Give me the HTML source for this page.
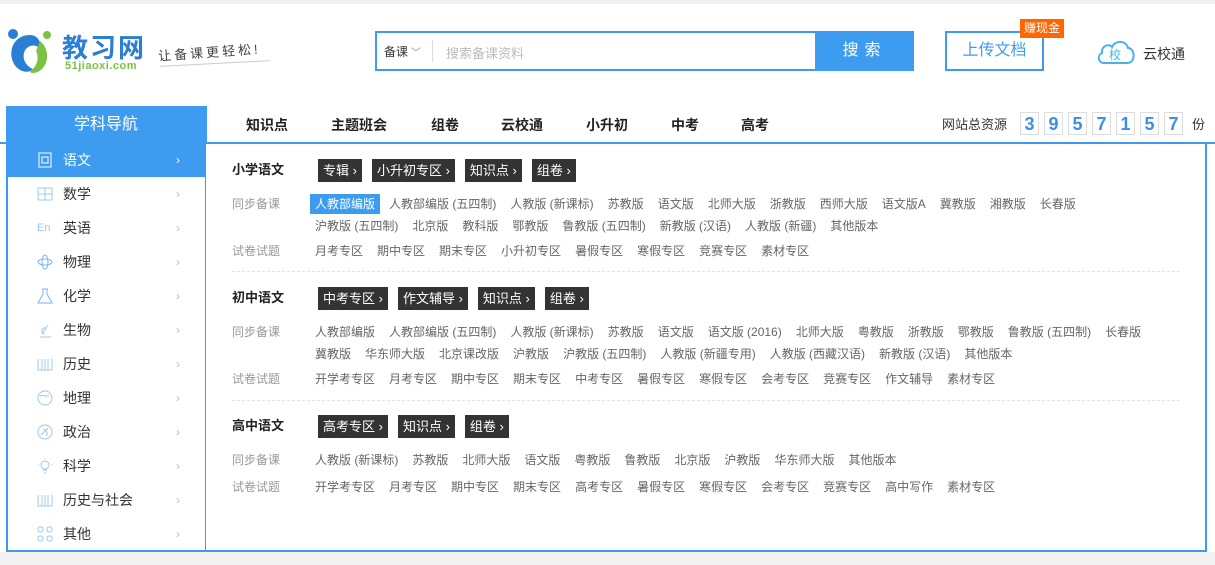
<!DOCTYPE html>
<html><head><meta charset="utf-8"><style>
*{margin:0;padding:0;box-sizing:border-box}
body{width:1215px;height:565px;background:#fff;font-family:"Liberation Sans","Noto Sans CJK SC",sans-serif;position:relative;overflow:hidden;color:#333}
.a{position:absolute}
.topbar{left:0;top:0;width:1215px;height:4px;background:#f0f0f0}
.bottom{left:0;top:552px;width:1215px;height:13px;background:#f2f2f2}
.search{left:375px;top:31px;width:539px;height:40px;border:2px solid #3d9cf0;background:#fff}
.sbtn{left:815px;top:31px;width:99px;height:40px;background:#3d9cf0;color:#fff;font-size:16px;text-align:center;line-height:40px;letter-spacing:6px}
.up{left:945px;top:31px;width:99px;height:40px;border:2px solid #3d9cf0;color:#3d9cf0;font-size:16px;text-align:center;line-height:36px}
.badge{left:1020px;top:19px;width:44px;height:19px;background:#f60;color:#fff;font-size:12px;text-align:center;line-height:19px}
.navline{left:0;top:142px;width:1215px;height:2px;background:#3d9cf0}
.side{left:6px;top:106px;width:201px;height:446px;border:2px solid #3d9cf0;border-top:none;background:#fff}
.sidehd{left:6px;top:106px;width:200px;height:37px;background:#3d9cf0;color:#fff;font-size:16px;text-align:center;line-height:37px}
.panel{left:206px;top:142px;width:1001px;height:410px;border:2px solid #3d9cf0;border-left:none;background:#fff}
.si{position:absolute;left:8px;width:198px;height:34px;font-size:14px;line-height:34px}
.si .t{position:absolute;left:55px}
.si .ar{position:absolute;left:168px;color:#bbb;font-size:12px}
.si svg{position:absolute;left:29px;top:9px}
.nav{top:115px;font-size:14px;font-weight:bold;color:#222}
.dg{top:112px;width:19px;height:23px;border:1px solid #ddd;color:#3d8ee8;font-size:18px;font-weight:bold;text-align:center;line-height:22px}
.tt{font-size:13px;font-weight:bold;color:#222;line-height:22px;left:232px}
.tags{left:318px;font-size:0;white-space:nowrap}
.tag{display:inline-block;background:#333;color:#fff;font-size:13px;height:23px;line-height:23px;padding:0 5px;margin-right:10px}
.lb{left:232px;font-size:12px;color:#999;line-height:22px}
.row{left:315px;width:900px;font-size:12px;color:#666;line-height:22px;white-space:nowrap}
.row span{margin-right:14px}
.row .on{background:#3d9cf0;color:#fff;padding:3px 5px;margin-left:-5px;margin-right:9px}
.sep{left:232px;width:948px;height:1px;border-top:1px dashed #e4e4e4}
</style></head><body>
<div class="a topbar"></div>
<svg class="a" style="left:6px;top:27px" width="48" height="50" viewBox="0 0 48 50">
<circle cx="7" cy="7" r="5" fill="#2a7fd4"/><circle cx="41" cy="8" r="4" fill="#7cc242"/>
<path d="M24 8 C10 8 3 20 6 32 C9 44 22 48 27 42 C22 40 16 34 18 26 C20 18 30 16 34 22 C36 16 32 8 24 8Z" fill="#2a7fd4"/>
<path d="M34 14 C42 20 44 34 36 42 C32 46 26 47 24 45 C30 40 34 32 30 24 Z" fill="#7cc242"/>
</svg>
<div class="a" style="left:62px;top:28px;font-size:26px;font-weight:bold;color:#2a7fd4;letter-spacing:2px">教习网</div>
<div class="a" style="left:65px;top:60px;font-size:11px;font-weight:bold;color:#7cc242;letter-spacing:0.5px">51jiaoxi.com</div>
<div class="a" style="left:158px;top:42px;font-size:13px;color:#444;letter-spacing:3px;transform:rotate(-4deg)">让备课更轻松!</div>
<div class="a" style="left:160px;top:63px;width:110px;height:1px;background:#ccc;transform:rotate(-3deg)"></div>
<div class="a search"></div>
<div class="a" style="left:384px;top:43px;font-size:12px;color:#333">备课<span style="color:#888;font-size:10px"> ﹀</span></div>
<div class="a" style="left:432px;top:40px;width:1px;height:22px;background:#ddd"></div>
<div class="a" style="left:446px;top:43px;font-size:13px;color:#bbb">搜索备课资料</div>
<div class="a sbtn">搜索</div>
<div class="a up">上传文档</div>
<div class="a badge">赚现金</div>
<svg class="a" style="left:1096px;top:37px" width="40" height="28" viewBox="0 0 40 28"><path d="M8 26 C2 26 1 18 6 16 C5 9 13 6 16 10 C19 3 30 3 32 11 C39 11 40 25 32 26 Z" fill="none" stroke="#45b4ee" stroke-width="2"/><text x="13" y="22" font-size="12" fill="#45b4ee" font-family="Noto Sans CJK SC">校</text></svg>
<div class="a" style="left:1143px;top:44px;font-size:14px;color:#333">云校通</div>

<div class="a navline"></div>
<div class="a nav" style="left:246px">知识点</div>
<div class="a nav" style="left:331px">主题班会</div>
<div class="a nav" style="left:431px">组卷</div>
<div class="a nav" style="left:501px">云校通</div>
<div class="a nav" style="left:586px">小升初</div>
<div class="a nav" style="left:671px">中考</div>
<div class="a nav" style="left:741px">高考</div>
<div class="a" style="left:942px;top:114px;font-size:13px;color:#333">网站总资源</div>
<div class="a dg" style="left:1020px">3</div><div class="a dg" style="left:1044px">9</div><div class="a dg" style="left:1068px">5</div><div class="a dg" style="left:1092px">7</div><div class="a dg" style="left:1116px">1</div><div class="a dg" style="left:1140px">5</div><div class="a dg" style="left:1164px">7</div>
<div class="a" style="left:1192px;top:114px;font-size:13px;color:#333">份</div>

<div class="a side"></div>
<div class="a sidehd">学科导航</div>
<div class="a" style="left:0;top:143px;width:215px;height:410px">
<div class="si" style="top:0;background:#3d9cf0;color:#fff"><svg width="16" height="16"><rect x="2" y="1" width="12" height="14" fill="none" stroke="#fff"/><rect x="5" y="5" width="6" height="6" fill="none" stroke="#fff"/></svg><span class="t">语文</span><span class="ar" style="color:#fff">›</span></div>
<div class="si" style="top:34px"><svg width="16" height="16"><rect x="1" y="2" width="14" height="12" fill="none" stroke="#9cc8ef"/><path d="M1 8H15M8 2V14" stroke="#9cc8ef"/></svg><span class="t">数学</span><span class="ar">›</span></div>
<div class="si" style="top:68px"><svg width="16" height="16"><text x="0" y="11" font-size="11" fill="#9cc8ef">En</text></svg><span class="t">英语</span><span class="ar">›</span></div>
<div class="si" style="top:102px"><svg width="16" height="16"><ellipse cx="8" cy="8" rx="7" ry="3" fill="none" stroke="#7ab6ee"/><ellipse cx="8" cy="8" rx="3" ry="7" fill="none" stroke="#7ab6ee"/></svg><span class="t">物理</span><span class="ar">›</span></div>
<div class="si" style="top:136px"><svg width="16" height="16"><path d="M5 1H11M6 1V6L1 15H15L10 6V1" fill="none" stroke="#7ab6ee"/></svg><span class="t">化学</span><span class="ar">›</span></div>
<div class="si" style="top:170px"><svg width="16" height="16"><path d="M3 15H14M5 12L11 3M8 12C3 10 4 5 9 6" fill="none" stroke="#9cc8ef"/></svg><span class="t">生物</span><span class="ar">›</span></div>
<div class="si" style="top:204px"><svg width="16" height="16"><path d="M1 3V14H15V3M5 3V14M8 3V14M11 3V14" fill="none" stroke="#9cc8ef"/></svg><span class="t">历史</span><span class="ar">›</span></div>
<div class="si" style="top:238px"><svg width="16" height="16"><circle cx="8" cy="8" r="7" fill="none" stroke="#9cc8ef"/><path d="M3 6C6 4 8 8 12 5" fill="none" stroke="#9cc8ef"/></svg><span class="t">地理</span><span class="ar">›</span></div>
<div class="si" style="top:272px"><svg width="16" height="16"><circle cx="8" cy="8" r="7" fill="none" stroke="#9cc8ef"/><path d="M4 11L11 4M6 5C10 6 11 10 9 12" fill="none" stroke="#9cc8ef"/></svg><span class="t">政治</span><span class="ar">›</span></div>
<div class="si" style="top:306px"><svg width="16" height="16"><circle cx="8" cy="7" r="4" fill="none" stroke="#9cc8ef"/><path d="M6 12H10M7 15H9M1 7H2M14 7H15M8 0V1" stroke="#9cc8ef"/></svg><span class="t">科学</span><span class="ar">›</span></div>
<div class="si" style="top:340px"><svg width="16" height="16"><path d="M1 3V14H15V3M5 3V14M8 3V14M11 3V14" fill="none" stroke="#9cc8ef"/></svg><span class="t">历史与社会</span><span class="ar">›</span></div>
<div class="si" style="top:374px"><svg width="16" height="16"><rect x="1" y="1" width="5" height="5" rx="2" fill="none" stroke="#9cc8ef"/><rect x="10" y="1" width="5" height="5" rx="2" fill="none" stroke="#9cc8ef"/><rect x="1" y="10" width="5" height="5" rx="2" fill="none" stroke="#9cc8ef"/><rect x="10" y="10" width="5" height="5" rx="2" fill="none" stroke="#9cc8ef"/></svg><span class="t">其他</span><span class="ar">›</span></div>
</div>

<div class="a panel"></div>
<div class="a tt" style="top:159px">小学语文</div>
<div class="a tags" style="top:159px"><span class="tag">专辑 ›</span><span class="tag">小升初专区 ›</span><span class="tag">知识点 ›</span><span class="tag">组卷 ›</span></div>
<div class="a lb" style="top:193px">同步备课</div>
<div class="a row" style="top:193px"><span class="on">人教部编版</span><span>人教部编版 (五四制)</span><span>人教版 (新课标)</span><span>苏教版</span><span>语文版</span><span>北师大版</span><span>浙教版</span><span>西师大版</span><span>语文版A</span><span>冀教版</span><span>湘教版</span><span>长春版</span><br><span>沪教版 (五四制)</span><span>北京版</span><span>教科版</span><span>鄂教版</span><span>鲁教版 (五四制)</span><span>新教版 (汉语)</span><span>人教版 (新疆)</span><span>其他版本</span></div>
<div class="a lb" style="top:240px">试卷试题</div>
<div class="a row" style="top:240px"><span>月考专区</span><span>期中专区</span><span>期末专区</span><span>小升初专区</span><span>暑假专区</span><span>寒假专区</span><span>竞赛专区</span><span>素材专区</span></div>
<div class="a sep" style="top:271px"></div>
<div class="a tt" style="top:287px">初中语文</div>
<div class="a tags" style="top:287px"><span class="tag">中考专区 ›</span><span class="tag">作文辅导 ›</span><span class="tag">知识点 ›</span><span class="tag">组卷 ›</span></div>
<div class="a lb" style="top:321px">同步备课</div>
<div class="a row" style="top:321px"><span>人教部编版</span><span>人教部编版 (五四制)</span><span>人教版 (新课标)</span><span>苏教版</span><span>语文版</span><span>语文版 (2016)</span><span>北师大版</span><span>粤教版</span><span>浙教版</span><span>鄂教版</span><span>鲁教版 (五四制)</span><span>长春版</span><br><span>冀教版</span><span>华东师大版</span><span>北京课改版</span><span>沪教版</span><span>沪教版 (五四制)</span><span>人教版 (新疆专用)</span><span>人教版 (西藏汉语)</span><span>新教版 (汉语)</span><span>其他版本</span></div>
<div class="a lb" style="top:368px">试卷试题</div>
<div class="a row" style="top:368px"><span>开学考专区</span><span>月考专区</span><span>期中专区</span><span>期末专区</span><span>中考专区</span><span>暑假专区</span><span>寒假专区</span><span>会考专区</span><span>竞赛专区</span><span>作文辅导</span><span>素材专区</span></div>
<div class="a sep" style="top:400px"></div>
<div class="a tt" style="top:415px">高中语文</div>
<div class="a tags" style="top:415px"><span class="tag">高考专区 ›</span><span class="tag">知识点 ›</span><span class="tag">组卷 ›</span></div>
<div class="a lb" style="top:449px">同步备课</div>
<div class="a row" style="top:449px"><span>人教版 (新课标)</span><span>苏教版</span><span>北师大版</span><span>语文版</span><span>粤教版</span><span>鲁教版</span><span>北京版</span><span>沪教版</span><span>华东师大版</span><span>其他版本</span></div>
<div class="a lb" style="top:476px">试卷试题</div>
<div class="a row" style="top:476px"><span>开学考专区</span><span>月考专区</span><span>期中专区</span><span>期末专区</span><span>高考专区</span><span>暑假专区</span><span>寒假专区</span><span>会考专区</span><span>竞赛专区</span><span>高中写作</span><span>素材专区</span></div>
<div class="a bottom"></div>
</body></html>
